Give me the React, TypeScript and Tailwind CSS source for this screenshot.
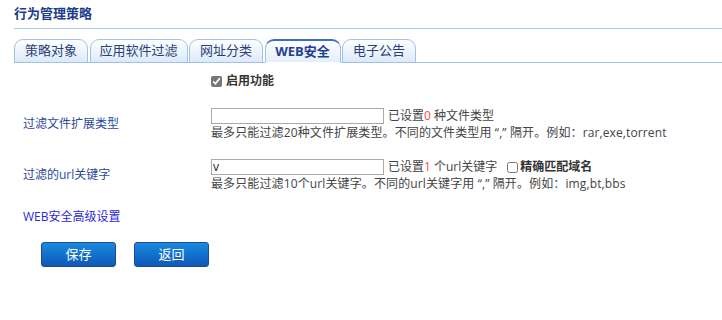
import React from "react";

const font = { fontFamily: '"Open Sans", "Noto Sans CJK SC", sans-serif' };

function Tab({ label, active, w }: { label: string; active?: boolean; w: string }) {
  return (
    <div
      className={`${w} h-[24px] -mb-px flex items-center justify-center rounded-t-[9px] border border-[#9ec2ea] ${
        active
          ? "border-t-2 border-t-[#3d6fc0] border-b-white bg-gradient-to-b from-white to-[#e3eefb] font-bold text-[#1f3f8f]"
          : "border-b-[#9ec2ea] bg-gradient-to-b from-white to-[#dde9f8] text-[#2a3f7a]"
      } text-[13px]`}
    >
      {label}
    </div>
  );
}

export default function App() {
  return (
    <div className="w-[722px] h-[320px] bg-white text-[12px] text-[#444]" style={font}>
      <div className="pl-[14px] pt-[5px]">
        <div className="h-[24px] text-[13px] font-bold text-[#1d3b8b] leading-[16px] border-b border-[#a9c8ec]">
          行为管理策略
        </div>
        <div className="mt-[10px] flex gap-[1.5px] border-b border-[#9ec2ea]">
          <Tab label="策略对象" w="w-[74px]" />
          <Tab label="应用软件过滤" w="w-[98px]" />
          <Tab label="网址分类" w="w-[74px]" />
          <Tab label="WEB安全" w="w-[76px]" active />
          <Tab label="电子公告" w="w-[74px]" />
        </div>
      </div>

      <div className="mt-[10px] pl-[211px] flex items-center gap-[4px] h-[16px]">
        <input type="checkbox" defaultChecked className="w-[11px] h-[11px] m-0 accent-[#777]" />
        <span className="font-bold text-[#333]">启用功能</span>
      </div>

      <div className="mt-[19px] flex">
        <div className="w-[211px] pl-[23px] pt-[7px] text-[#2b4a9a]">过滤文件扩展类型</div>
        <div className="flex flex-col">
          <div className="flex items-center h-[16px]">
            <input className="w-[173px] h-[16px] border border-[#a9a9a9] outline-none px-[2px] text-[12px]" />
            <span className="ml-[4px]">已设置<span className="text-[#ff4a3a]">0</span> 种文件类型</span>
          </div>
          <div className="mt-[1px] leading-[16px] tracking-[0.12px]">最多只能过滤20种文件扩展类型。不同的文件类型用 “,” 隔开。例如：rar,exe,torrent</div>
        </div>
      </div>

      <div className="mt-[18px] flex">
        <div className="w-[211px] pl-[23px] pt-[7px] text-[#2b4a9a]">过滤的url关键字</div>
        <div className="flex flex-col">
          <div className="flex items-center h-[16px]">
            <input
              defaultValue="v"
              className="w-[173px] h-[16px] border border-[#a9a9a9] outline-none px-[1px] text-[12px] text-[#222]"
            />
            <span className="ml-[4px]">已设置<span className="text-[#ff4a3a]">1</span> 个url关键字</span>
            <input type="checkbox" className="ml-[10px] w-[11px] h-[11px] m-0" />
            <span className="ml-[2px] font-bold text-[#333]">精确匹配域名</span>
          </div>
          <div className="mt-[1px] leading-[16px] tracking-[0.12px]">最多只能过滤10个url关键字。不同的url关键字用 “,” 隔开。例如：img,bt,bbs</div>
        </div>
      </div>

      <div className="mt-[16px] pl-[23px] text-[#2a2ad8]">WEB安全高级设置</div>

      <div className="mt-[16px] pl-[41px] flex gap-[18px]">
        <button className="w-[75px] h-[25px] rounded-[3px] border border-[#1d4a8c] bg-gradient-to-b from-[#1a8ae0] to-[#0f58b8] text-white text-[13px]">
          保存
        </button>
        <button className="w-[75px] h-[25px] rounded-[3px] border border-[#1d4a8c] bg-gradient-to-b from-[#1a8ae0] to-[#0f58b8] text-white text-[13px]">
          返回
        </button>
      </div>
    </div>
  );
}
